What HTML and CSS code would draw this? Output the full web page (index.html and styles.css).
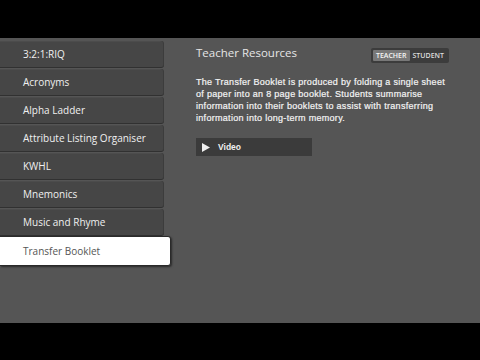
FILE: index.html
```html
<!DOCTYPE html>
<html>
<head>
<meta charset="utf-8">
<link rel="stylesheet" href="styles.css">
</head>
<body>
<div class="band"></div>
<div class="main">
  <ul class="menu">
    <li class="item">3:2:1:RIQ</li>
    <li class="item">Acronyms</li>
    <li class="item">Alpha Ladder</li>
    <li class="item">Attribute Listing Organiser</li>
    <li class="item">KWHL</li>
    <li class="item">Mnemonics</li>
    <li class="item">Music and Rhyme</li>
    <li class="item active">Transfer Booklet</li>
  </ul>
  <div class="content">
    <div class="head">
      <h1 class="title">Teacher Resources</h1>
      <div class="toggle">
        <span class="opt on">TEACHER</span>
        <span class="opt">STUDENT</span>
      </div>
    </div>
    <p class="desc">The Transfer Booklet is produced by folding a single sheet of paper into an 8 page booklet. Students summarise information into their booklets to assist with transferring information into long-term memory.</p>
    <div class="video">
      <svg class="play" width="8" height="9" viewBox="0 0 8 9"><path d="M0 0 L8 4.5 L0 9 Z" fill="#f0f0f0"/></svg>
      <span>Video</span>
    </div>
  </div>
</div>
<div class="band bottom"></div>
</body>
</html>
```
FILE: styles.css
```css
html, body {
  margin: 0;
  padding: 0;
  background: #000;
  width: 480px;
  height: 360px;
  overflow: hidden;
}
.band {
  height: 38px;
  background: #000;
}
.band.bottom {
  height: 37px;
}
.main {
  height: 285px;
  background: #555555;
  display: flex;
  box-sizing: border-box;
  padding-top: 3px;
}
.menu {
  list-style: none;
  margin: 0;
  padding: 0;
  width: 171px;
  flex: none;
}
.item {
  width: 164px;
  height: 27px;
  box-sizing: border-box;
  border-bottom: 1px solid #313131;
  background: #464646;
  border-radius: 0 3px 3px 0;
  box-shadow: inset -1px 0 0 #3c3c3c, inset 0 1px 0 #4c4c4c;
  color: #f0f0f0;
  font-family: "Open Sans", sans-serif;
  font-size: 10px;
  line-height: 26px;
  padding-left: 23px;
  margin-bottom: 1px;
  white-space: nowrap;
}
.item.active {
  width: 171px;
  height: 30px;
  background: #fff;
  color: #555;
  border: 1px solid #2a2a2a;
  border-left: 0;
  border-radius: 0 3px 3px 0;
  box-shadow: 1px 1px 2px rgba(0,0,0,0.5);
  line-height: 28px;
  margin-top: -1px;
}
.content {
  margin-left: 25px;
  width: 252px;
  display: flex;
  flex-direction: column;
}
.head {
  display: flex;
  justify-content: space-between;
  align-items: flex-start;
  height: 30px;
}
.title {
  margin: 4px 0 0 0;
  font-family: "Open Sans", sans-serif;
  font-weight: normal;
  font-size: 11.5px;
  color: #e6e6e6;
  line-height: 16px;
}
.toggle {
  margin-top: 7px;
  margin-right: -1px;
  display: flex;
  background: #3c3c3c;
  padding: 2px;
  border-radius: 2px;
  height: 11px;
}
.opt {
  font-family: "Open Sans", sans-serif;
  font-weight: 600;
  font-size: 7px;
  line-height: 11px;
  color: #dcdcdc;
  padding: 0 3px;
}
.opt.on {
  background: #787878;
  color: #f5f5f5;
  border-radius: 1px;
}
.desc {
  margin: 5px 0 0 0;
  font-family: "Liberation Sans", Arial, sans-serif;
  font-size: 9px;
  font-weight: normal;
  letter-spacing: 0.3px;
  line-height: 12px;
  color: #f4f4f4;
  -webkit-text-stroke: 0.2px #f4f4f4;
  width: 250px;
}
.video {
  margin-top: 14px;
  width: 116px;
  height: 18px;
  background: #3b3b3b;
  display: flex;
  align-items: center;
  font-family: "Liberation Sans", Arial, sans-serif;
  font-size: 8.5px;
  font-weight: bold;
  color: #f0f0f0;
}
.play {
  margin-left: 6px;
  margin-right: 8px;
}
```
